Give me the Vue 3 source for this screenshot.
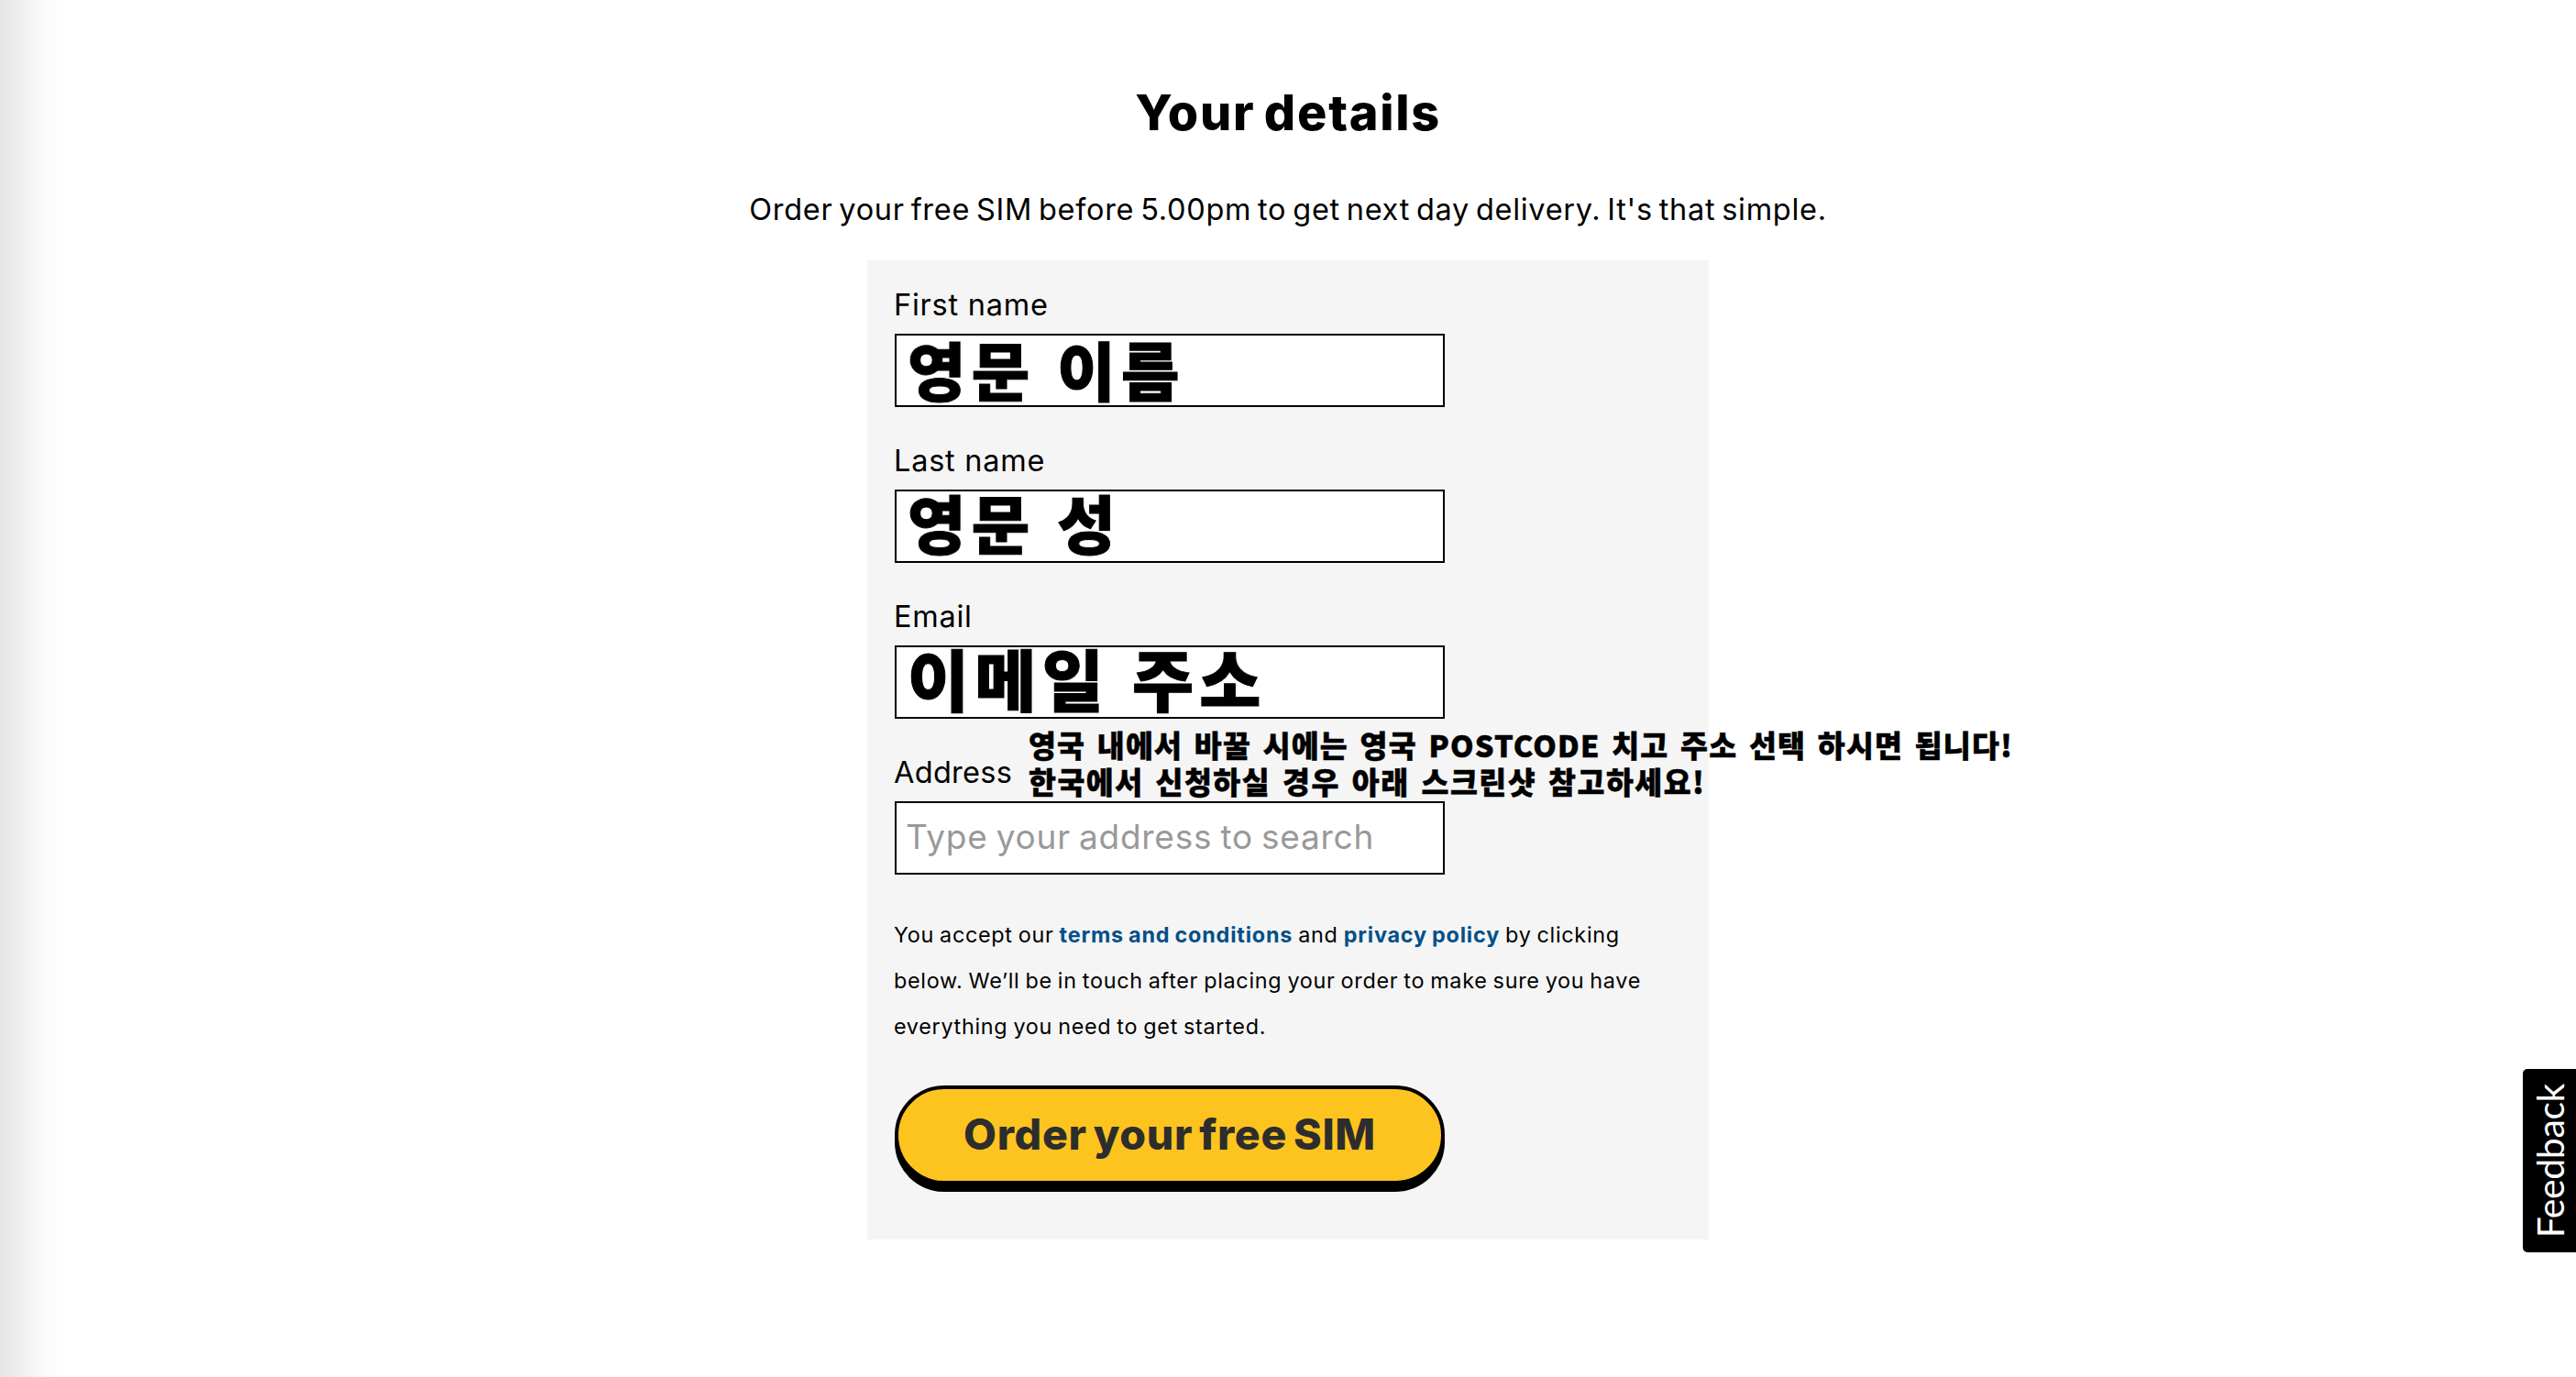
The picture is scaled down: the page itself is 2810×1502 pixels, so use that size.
<script setup>
import { ref } from "vue";

const fields = ref([
  { id: "first", label: "First name", value: "영문 이름" },
  { id: "last", label: "Last name", value: "영문 성" },
  { id: "email", label: "Email", value: "이메일 주소" },
  { id: "address", label: "Address", placeholder: "Type your address to search" },
]);
</script>

<template>
  <main class="page">
    <h1 class="title">Your details</h1>
    <p class="intro">
      Order your free SIM before 5.00pm to get next day delivery. It's that simple.
    </p>

    <form class="card" @submit.prevent>
      <div v-for="field in fields" :key="field.id" class="field" :class="field.id">
        <label class="label" :for="field.id">{{ field.label }}</label>
        <input
          :id="field.id"
          v-model="field.value"
          class="input"
          type="text"
          spellcheck="false"
          :placeholder="field.placeholder"
        />
        <div v-if="field.id === 'address'" class="note">
          <div class="note-line">영국 내에서 바꿀 시에는 영국 POSTCODE 치고 주소 선택 하시면 됩니다!</div>
          <div>한국에서 신청하실 경우 아래 스크린샷 참고하세요!</div>
        </div>
      </div>

      <p class="terms">
        <span class="terms-lead">You accept our <a>terms and conditions</a> and <a>privacy policy</a> by clicking</span><br />
        below. We’ll be in touch after placing your order to make sure you have<br />
        everything you need to get started.
      </p>

      <button class="submit" type="submit">Order your free SIM</button>
    </form>

    <div class="edge-shade"></div>
    <button class="feedback" type="button"><span class="feedback-text">Feedback</span></button>
  </main>
</template>

<style>
body {
  margin: 0;
  background: #fff;
}
</style>

<style scoped>
.page {
  position: relative;
  box-sizing: border-box;
  display: flex;
  flex-direction: column;
  align-items: center;
  height: 1502px;
  padding-top: 89px;
  overflow: hidden;
  background: #fff;
  color: #000;
  font-family: Inter, "Noto Sans CJK KR", sans-serif;
}

.title {
  margin: 0 0 44px;
  font-size: 54px;
  font-weight: 800;
  line-height: 68px;
  letter-spacing: 1.7px;
  word-spacing: -4px;
}

.intro {
  margin: 0 0 27px;
  font-size: 32.5px;
  line-height: 56px;
  letter-spacing: 0.7px;
  word-spacing: -2.9px;
  white-space: nowrap;
}

.card {
  box-sizing: border-box;
  width: 918px;
  height: 1068px;
  padding: 29px 30px 60px;
  background: #f5f5f5;
}

.field {
  position: relative;
  display: flex;
  flex-direction: column;
  gap: 11px;
  margin-bottom: 39px;
}

.label {
  margin-left: -1px;
  font-size: 32.5px;
  line-height: 40px;
  letter-spacing: 0.75px;
}

.address .label {
  letter-spacing: 0.3px;
}

.input {
  box-sizing: border-box;
  width: 600px;
  height: 80px;
  padding: 0 12px 5px 12px;
  border: 2px solid #000;
  border-radius: 0;
  outline: none;
  background: #fff;
  color: #000;
  font-family: "Noto Sans CJK KR", sans-serif;
  font-size: 69px;
  font-weight: 900;
  line-height: 70px;
  letter-spacing: 6.2px;
  word-spacing: 2px;
  -webkit-text-stroke: 1px #000;
}

.last .input {
  padding-bottom: 11px;
}

.email .input {
  padding-bottom: 13px;
  font-size: 73px;
}

.address .input {
  padding: 0 10px 3px;
  font-family: Inter, sans-serif;
  font-size: 37px;
  font-weight: 400;
  letter-spacing: 0.75px;
  word-spacing: -2px;
  -webkit-text-stroke: 0;
}

.address .input::placeholder {
  color: #999;
  opacity: 1;
}

/* sits beside the address label and runs past the card */
.note {
  position: absolute;
  top: -31px;
  left: 146px;
  font-family: "Noto Sans CJK KR", sans-serif;
  font-size: 32.5px;
  font-weight: 900;
  line-height: 40px;
  letter-spacing: 1.5px;
  word-spacing: 4px;
  white-space: nowrap;
  -webkit-text-stroke: 0.5px #000;
}

.note-line {
  letter-spacing: 1.2px;
}

.terms {
  margin: 41px 0 39px -1px;
  font-size: 23.4px;
  line-height: 50px;
  letter-spacing: 0.69px;
  word-spacing: -1.2px;
  white-space: nowrap;
}

.terms a {
  color: #045089;
  font-weight: 700;
  letter-spacing: 0.8px;
}

.submit {
  box-sizing: border-box;
  display: flex;
  align-items: center;
  justify-content: center;
  width: 600px;
  height: 108px;
  padding: 0 0 2px;
  border: 4px solid #000;
  border-radius: 54px;
  background: #fdc41f;
  box-shadow: 0 8px 0 #000;
  color: #2d2d2d;
  font-family: inherit;
  font-size: 46.5px;
  font-weight: 800;
  line-height: 60px;
  letter-spacing: 0.7px;
  word-spacing: -4px;
  cursor: pointer;
}

.edge-shade {
  position: absolute;
  top: 0;
  left: 0;
  width: 72px;
  height: 100%;
  background: linear-gradient(to right, #e5e5e5 0, #ececec 18px, #f5f5f5 35px, #fcfcfc 53px, #fff 72px);
}

.feedback {
  position: absolute;
  top: 1166px;
  right: 0;
  display: flex;
  align-items: center;
  justify-content: center;
  width: 58px;
  height: 200px;
  padding: 0;
  border: none;
  border-radius: 5px 0 0 5px;
  background: #000;
  color: #fff;
  font-family: Lato, sans-serif;
  font-size: 41px;
  line-height: 58px;
  letter-spacing: -0.4px;
  cursor: pointer;
}

.feedback-text {
  writing-mode: vertical-rl;
  transform: rotate(180deg) translateX(-1px);
}
</style>
